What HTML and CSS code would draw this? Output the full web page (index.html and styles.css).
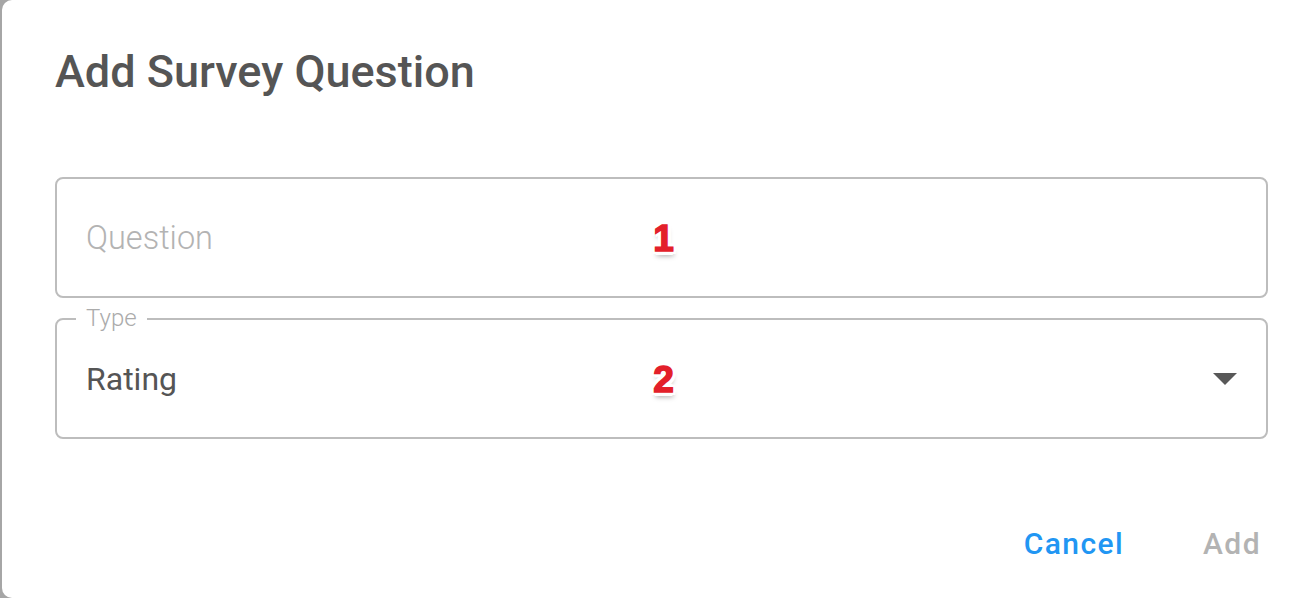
FILE: index.html
```html
<!DOCTYPE html>
<html lang="en">
<head>
	<meta charset="UTF-8">
	<meta name="viewport" content="width=device-width, initial-scale=1.0">
	<title>Add Survey Question</title>
	<link rel="stylesheet" href="styles.css">
</head>
<body>
	<!-- Add question dialog -->
	<div class="dialog">
		<h2 class="dialog_title">Add Survey Question</h2>

		<div class="dialog_content">
			<div class="field">
				<input type="text" class="field_input" placeholder="Question">
				<span class="step">1</span>
			</div>

			<div class="field field_select">
				<label class="field_label">Type</label>
				<span class="field_value">Rating</span>
				<span class="step">2</span>
				<svg class="arrow" width="24" height="12" viewBox="0 0 24 12">
					<polygon points="0,0 24,0 12,12" fill="#585858"/>
				</svg>
			</div>
		</div>

		<div class="dialog_actions">
			<button type="button" class="btn btn_primary">Cancel</button>
			<button type="button" class="btn" disabled>Add</button>
		</div>
	</div>
</body>
</html>
```

FILE: styles.css
```css
html, body {
	margin: 0;
	height: 100%;
}
body {
	background: #a6a6a6;
	font-family: Roboto, "Liberation Sans", sans-serif;
	overflow: hidden;
}
.dialog {
	margin-left: 2px;
	height: 598px;
	background: #fff;
	border-radius: 10px 0 0 10px;
	padding: 0 48px 0 53px;
	box-sizing: border-box;
	display: flex;
	flex-direction: column;
}
.dialog_title {
	margin: 0;
	padding-top: 47px;
	font-size: 45px;
	line-height: 50px;
	font-weight: 500;
	color: #555;
}
.dialog_content {
	margin-top: 80px;
	display: flex;
	flex-direction: column;
	gap: 20px;
}
.field {
	position: relative;
	height: 121px;
	border: 2px solid #bdbdbd;
	border-radius: 8px;
	box-sizing: border-box;
	display: flex;
	align-items: center;
	padding: 0 28px 0 29px;
}
.field_input {
	border: none;
	outline: none;
	padding: 0;
	width: 100%;
	font-family: inherit;
	font-size: 32.5px;
	font-weight: 300;
	color: #555;
	background: transparent;
}
.field_input::placeholder {
	color: #b3b3b3;
}
.field_label {
	position: absolute;
	top: -17px;
	left: 19px;
	padding: 0 10px;
	background: #fff;
	font-size: 24px;
	line-height: 30px;
	font-weight: 300;
	color: #ababab;
}
.field_value {
	flex: 1;
	font-size: 32px;
	font-weight: 400;
	color: #555;
}
.arrow {
	display: block;
	margin-right: 1px;
}
/* red step numbers over the fields */
.step {
	position: absolute;
	left: 50%;
	top: 50%;
	transform: translate(-40%, -50%);
	font-family: "Liberation Sans", Arial, sans-serif;
	font-weight: bold;
	font-size: 37px;
	line-height: 37px;
	color: #e3202a;
	-webkit-text-stroke: 1.5px #e3202a;
	text-shadow:
		2px 0 0 #fff, -2px 0 0 #fff, 0 2px 0 #fff, 0 -2px 0 #fff,
		2px 2px 0 #fff, -2px -2px 0 #fff, 2px -2px 0 #fff, -2px 2px 0 #fff,
		4px 0 0 #fff, -4px 0 0 #fff, 0 4px 0 #fff, 0 -4px 0 #fff,
		3px 3px 0 #fff, -3px -3px 0 #fff, 3px -3px 0 #fff, -3px 3px 0 #fff,
		1px 5px 5px rgba(0, 0, 0, 0.35);
}
.dialog_actions {
	margin-top: auto;
	margin-right: -28px;
	padding-bottom: 28px;
	display: flex;
	justify-content: flex-end;
	gap: 28px;
}
.btn {
	min-width: 128px;
	padding: 6px 16px;
	border: none;
	background: transparent;
	font-family: inherit;
	font-size: 30px;
	font-weight: 500;
	letter-spacing: 1.4px;
	line-height: 40px;
	color: #b3b3b3;
}
.btn_primary {
	color: #2196f3;
}
```
